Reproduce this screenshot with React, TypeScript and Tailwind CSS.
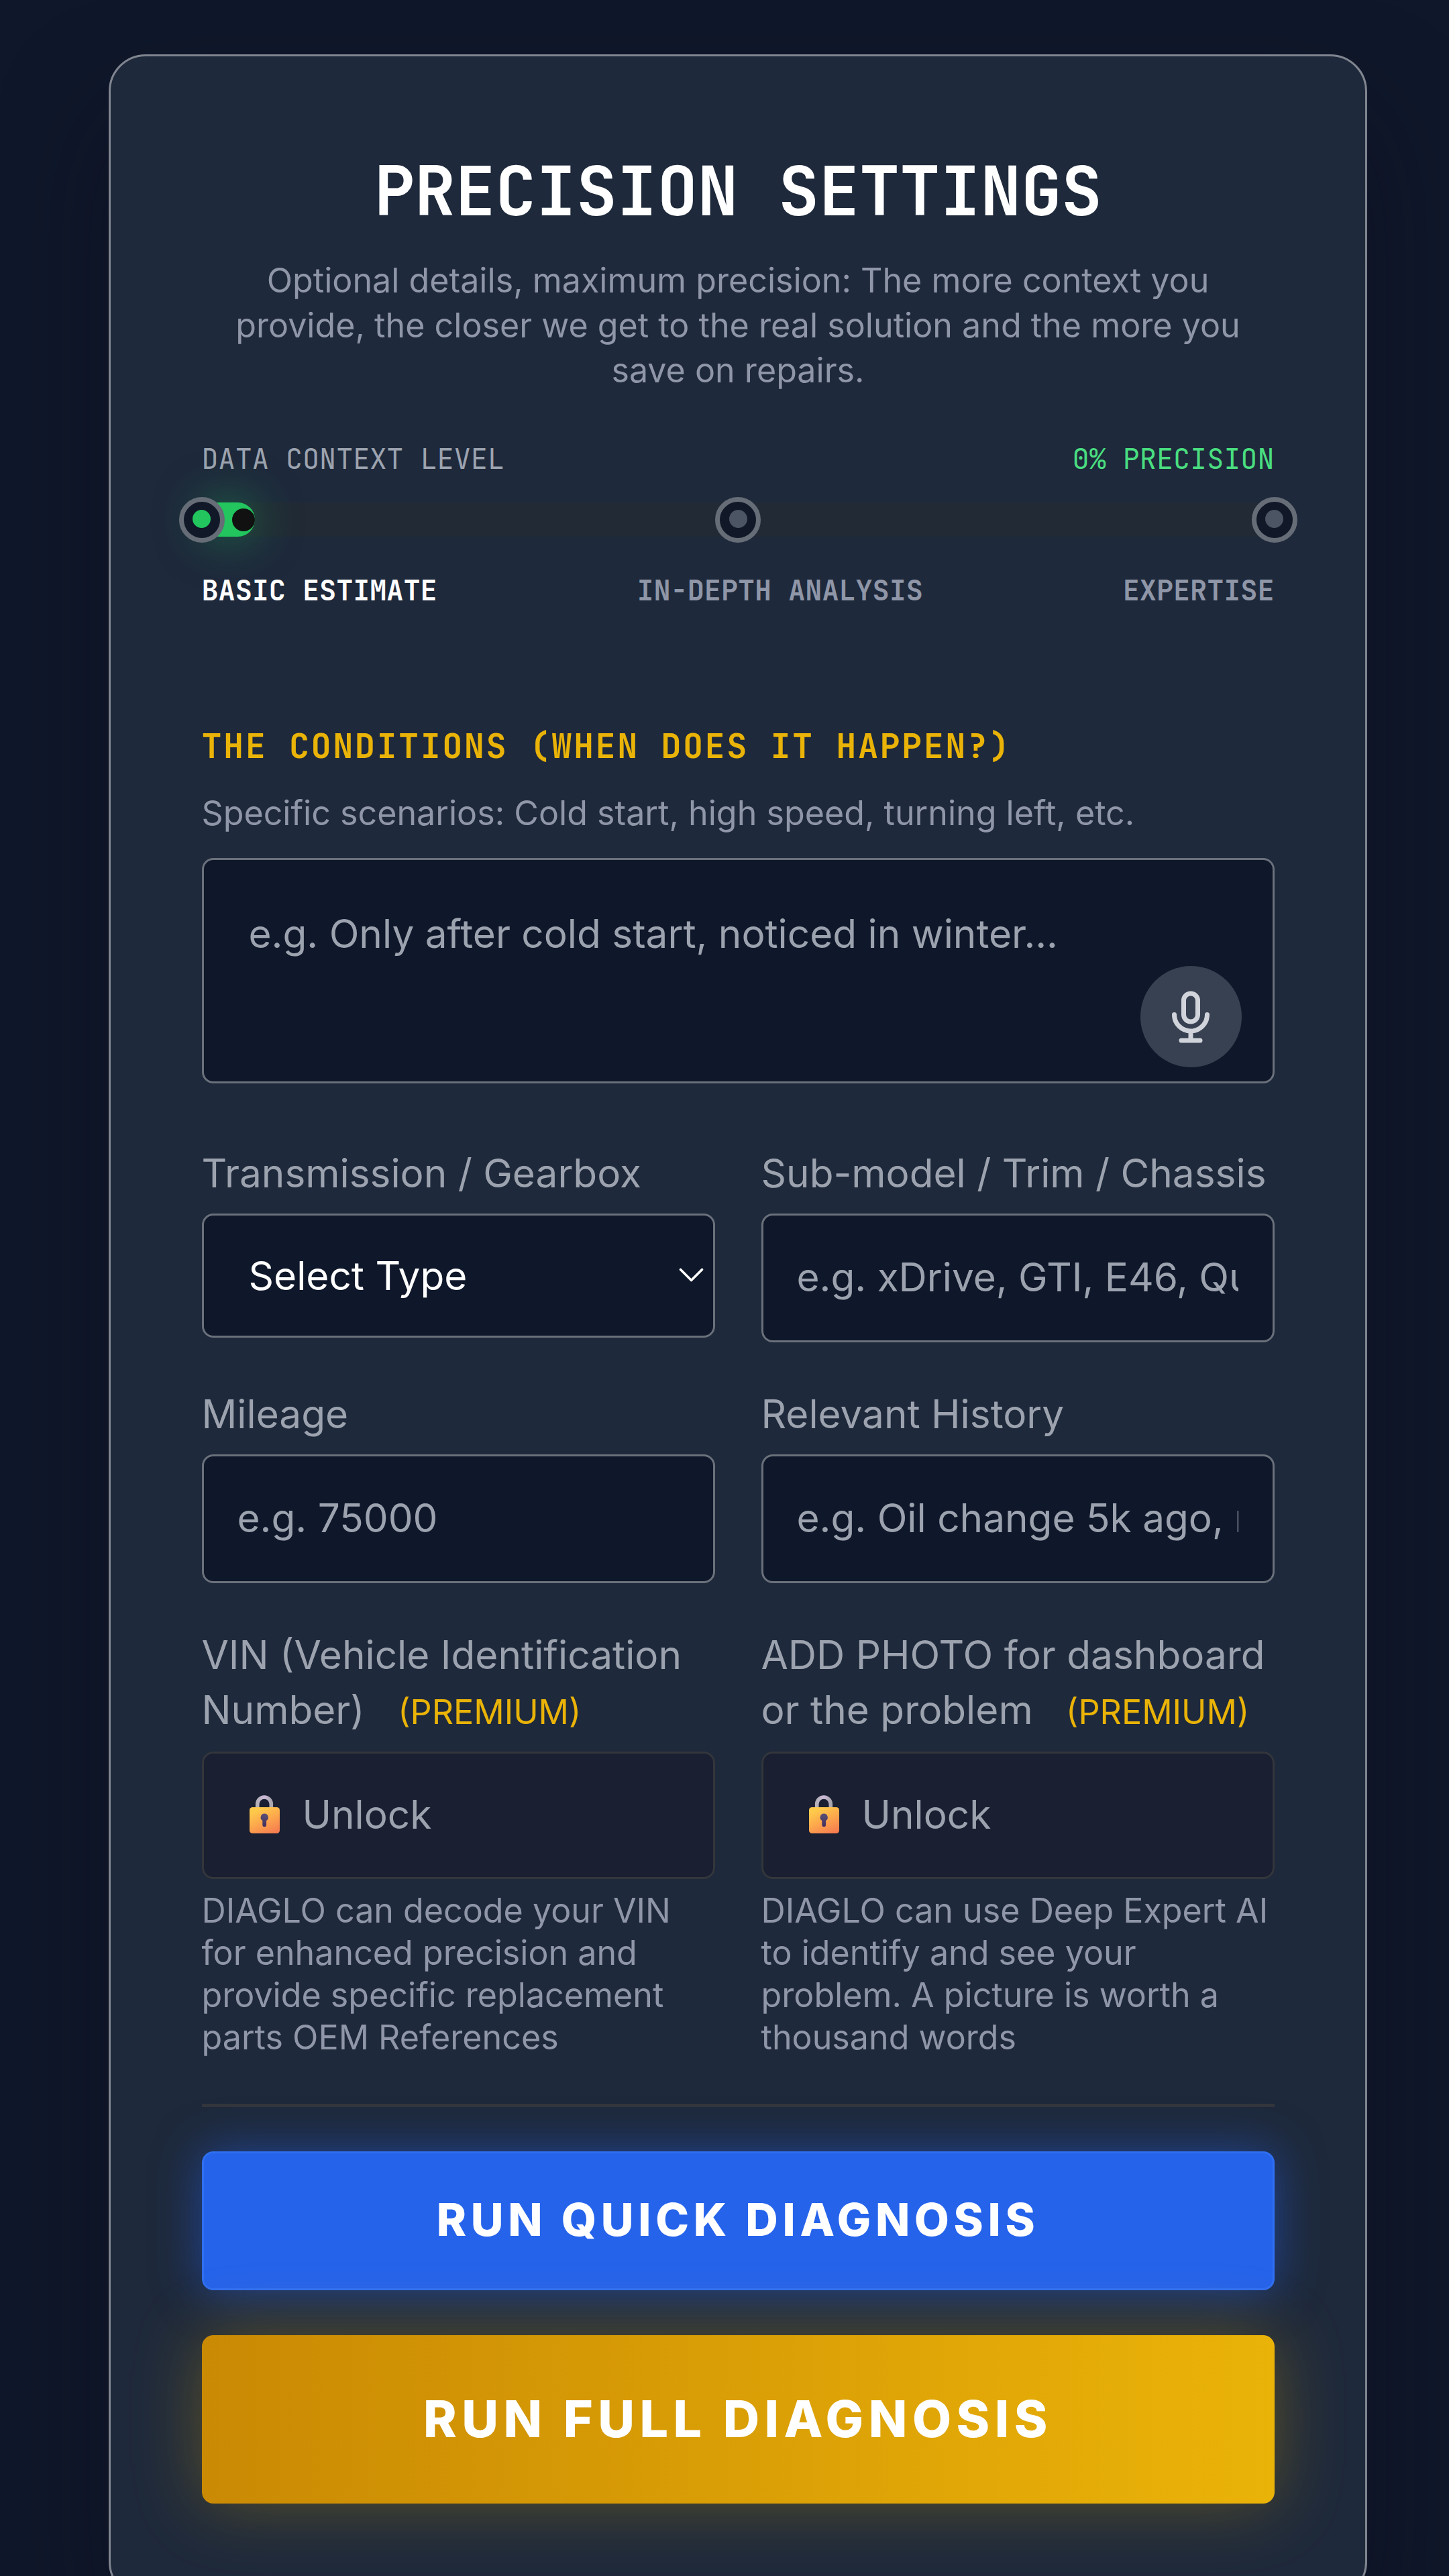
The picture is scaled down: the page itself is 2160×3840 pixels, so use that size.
import type { ReactNode } from "react";

const MONO = "font-['JetBrains_Mono','DejaVu_Sans_Mono',monospace]";
const FIELD =
  "w-full rounded-[17px] border-[3px] border-[#6a717b] bg-[#0f172a] text-[58.5px] leading-[82px] text-white outline-none placeholder:text-[#9ca3af] placeholder:opacity-100";

function Knob({ active = false, className }: { active?: boolean; className: string }) {
  return (
    <div
      className={`absolute top-1/2 flex size-[68px] -translate-x-1/2 -translate-y-1/2 items-center justify-center rounded-full border-[7px] border-[#666d77] bg-[#111827] ${className}`}
    >
      <div className={`relative -top-px size-[27px] rounded-full ${active ? "bg-[#22c55e]" : "bg-[#4b5563]"}`} />
    </div>
  );
}

function MicIcon() {
  return (
    <svg className="size-[84px]" viewBox="0 0 24 24" fill="none" stroke="currentColor" strokeWidth="2" strokeLinecap="round" strokeLinejoin="round">
      <path d="M19 11a7 7 0 01-7 7m0 0a7 7 0 01-7-7m7 7v4m0 0H8m4 0h4m-4-8a3 3 0 01-3-3V5a3 3 0 116 0v6a3 3 0 01-3 3z" />
    </svg>
  );
}

function LockIcon({ id }: { id: string }) {
  return (
    <svg className="h-[57px] w-[45px] shrink-0" viewBox="0 0 45 57">
      <defs>
        <linearGradient id={`${id}-body`} x1="0.2" y1="0" x2="0.75" y2="1">
          <stop offset="0.1" stopColor="#ffca4b" />
          <stop offset="0.5" stopColor="#fdaa4c" />
          <stop offset="1" stopColor="#f67e50" />
        </linearGradient>
        <linearGradient id={`${id}-shackle`} x1="0" y1="0" x2="1" y2="0">
          <stop offset="0" stopColor="#b5b2ba" />
          <stop offset="0.5" stopColor="#cbb9d8" />
          <stop offset="1" stopColor="#a9a6ae" />
        </linearGradient>
        <linearGradient id={`${id}-hole`} x1="0" y1="0" x2="0" y2="1">
          <stop offset="0" stopColor="#5b5077" />
          <stop offset="1" stopColor="#43305d" />
        </linearGradient>
      </defs>
      <path d="M11.7 22V13.3a10.3 10.3 0 0 1 20.6 0V22" fill="none" stroke={`url(#${id}-shackle)`} strokeWidth="5.6" />
      <rect x="0" y="18" width="45" height="39" rx="4.5" fill={`url(#${id}-body)`} />
      <path d="M22.2 27.6a5.6 5.6 0 0 1 2.9 10.4v6.2a2.9 2.9 0 0 1-5.8 0V38a5.6 5.6 0 0 1 2.9-10.4z" fill={`url(#${id}-hole)`} />
    </svg>
  );
}

function Label({ children }: { children: ReactNode }) {
  return <label className="block text-[58.5px] leading-[82px] text-[#9ca3af]">{children}</label>;
}

function Premium() {
  return <span className="ml-[33px] text-[50.3px] leading-none text-[#eab308]">(PREMIUM)</span>;
}

function TextField({ label, placeholder }: { label: string; placeholder: string }) {
  return (
    <div>
      <Label>{label}</Label>
      <input className={`${FIELD} mt-[19px] block h-[192px] pt-0 pr-[51px] pb-[4px] pl-[50px]`} placeholder={placeholder} />
    </div>
  );
}

function LockedField({ id, children, note }: { id: string; children: ReactNode; note: string }) {
  return (
    <div>
      <Label>
        {children} <Premium />
      </Label>
      <button className="mt-[21px] flex h-[190px] w-full items-center gap-[34px] rounded-[17px] border-[3px] border-[#33363b] bg-[#1a1f31] px-[68px] pb-[3px] text-left text-[58.5px] leading-[82px] text-[#9ca3af]">
        <LockIcon id={id} />
        <span>Unlock</span>
      </button>
      <p className="mt-[16px] text-[50.2px] leading-[62.7px] text-[#8f96a7]">{note}</p>
    </div>
  );
}

export default function App() {
  return (
    <div className="h-[3840px] w-[2160px] overflow-hidden bg-[#0f172a] pt-[81px] pl-[162px] font-['Inter',sans-serif]">
      <main className="h-[3793px] w-[1876px] rounded-[55px] border-[3px] border-[#80858f] bg-[#1e293b] pt-[141px] pr-[135.5px] pl-[135.5px] shadow-[0_86px_171px_-20px_rgba(16,14,28,0.5)]">
        <h1 className={`${MONO} text-center text-[101px] leading-[120px] font-bold tracking-[-0.35px] text-white`}>PRECISION SETTINGS</h1>
        <p className="mt-[40px] px-[30px] text-center text-[50.2px] leading-[66.8px] text-[#8f96a7]">
          Optional details, maximum precision: The more context you provide, the closer we get to the real solution and the more you save on repairs.
        </p>

        <section className={`${MONO} mt-[69px] text-[41.8px] leading-[60px]`}>
          <div className="flex justify-between">
            <span className="text-[#9ca3af]">DATA CONTEXT LEVEL</span>
            <span className="text-[#4ade80]">0% PRECISION</span>
          </div>
          <div className="relative mt-[35px] h-[51px] rounded-full bg-[#212a35]">
            <div className="flex h-full w-[5%] items-center justify-end rounded-full bg-[#22c55e] shadow-[0_0_69px_rgba(34,197,94,0.5)]">
              <div className="size-[34px] rounded-full bg-[#111111]" />
            </div>
            <Knob active className="left-0" />
            <Knob className="left-1/2" />
            <Knob className="left-full" />
          </div>
          <div className="mt-[50px] flex justify-between font-bold text-[#8f96a7]">
            <span className="text-white">BASIC ESTIMATE</span>
            <span>IN-DEPTH ANALYSIS</span>
            <span>EXPERTISE</span>
          </div>
        </section>

        <section className="mt-[167px]">
          <h2 className={`${MONO} text-[50.2px] leading-[70px] font-bold tracking-[2.5px] text-[#eab308]`}>THE CONDITIONS (WHEN DOES IT HAPPEN?)</h2>
          <p className="mt-[31px] text-[50.2px] leading-[67px] text-[#8f96a7]">Specific scenarios: Cold start, high speed, turning left, etc.</p>
          <div className="relative mt-[34px]">
            <textarea
              className={`${FIELD} block h-[336px] resize-none px-[67px] pt-[69px]`}
              placeholder="e.g. Only after cold start, noticed in winter..."
            />
            <button className="absolute right-[49px] bottom-[24px] flex size-[151px] items-center justify-center rounded-full bg-[#384151] text-[#d1d5db]">
              <MicIcon />
            </button>
          </div>
        </section>

        <section className="mt-[93px] grid grid-cols-2 gap-x-[69px] gap-y-[66px]">
          <div>
            <Label>Transmission / Gearbox</Label>
            <div className={`${FIELD} mt-[19px] flex h-[185px] items-center justify-between pr-[14px] pl-[67px]`}>
              <span>Select Type</span>
              <svg className="mb-[2px] h-[22px] w-[37px]" viewBox="0 0 37 22" fill="none" stroke="currentColor" strokeWidth="3.6" strokeLinecap="round" strokeLinejoin="round">
                <path d="M2.5 2.5 18.5 18.5 34.5 2.5" />
              </svg>
            </div>
          </div>
          <TextField label="Sub-model / Trim / Chassis" placeholder="e.g. xDrive, GTI, E46, Quattro" />
          <TextField label="Mileage" placeholder="e.g. 75000" />
          <TextField label="Relevant History" placeholder="e.g. Oil change 5k ago, new brakes" />
          <LockedField id="vin" note="DIAGLO can decode your VIN for enhanced precision and provide specific replacement parts OEM References">
            VIN (Vehicle Identification Number)
          </LockedField>
          <LockedField id="photo" note="DIAGLO can use Deep Expert AI to identify and see your problem. A picture is worth a thousand words">
            ADD PHOTO for dashboard or the problem
          </LockedField>
        </section>

        <section className="mt-[68px] flex flex-col border-t-[5px] border-[#33363b] pt-[66px] text-white">
          <button className="h-[207px] rounded-[17px] border-[3px] border-[#2f6ff2] bg-[#2563eb] pb-[3px] text-[67.1px] font-extrabold tracking-[6.7px] shadow-[0_0_69px_rgba(37,99,235,0.5)]">
            RUN QUICK DIAGNOSIS
          </button>
          <button className="mt-[67px] h-[251px] rounded-[17px] bg-linear-to-r/srgb from-[#ca8a04] to-[#eab308] text-[75.3px] font-extrabold tracking-[7.5px] shadow-[0_0_103px_rgba(234,179,8,0.3)]">
            RUN FULL DIAGNOSIS
          </button>
        </section>
      </main>
    </div>
  );
}
